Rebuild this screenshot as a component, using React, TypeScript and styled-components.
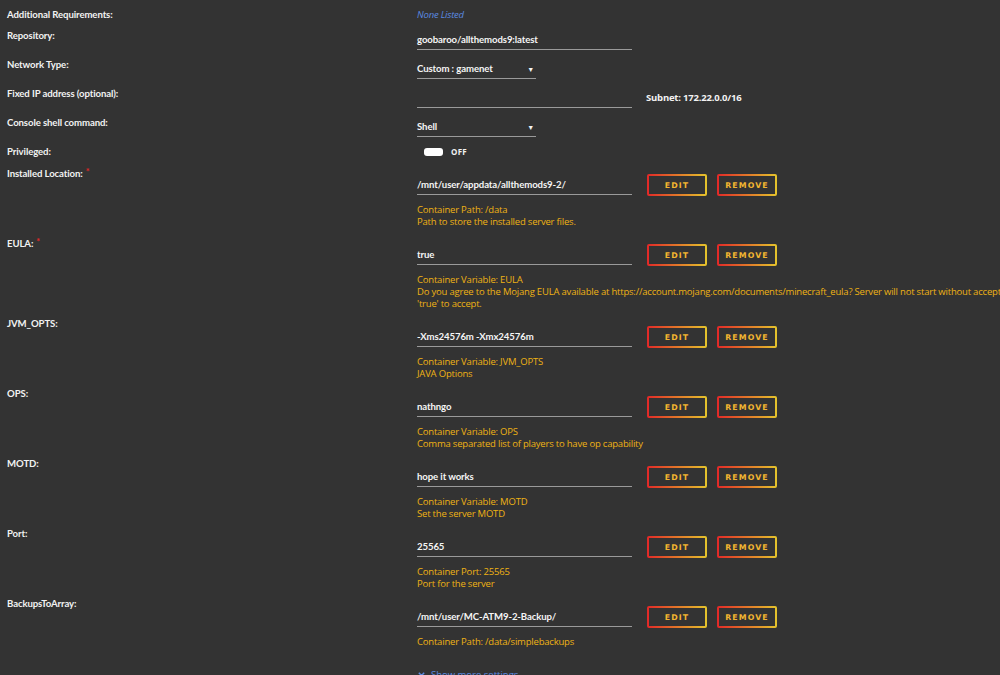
import styled, { createGlobalStyle } from 'styled-components';

const GlobalStyle = createGlobalStyle`
  html, body {
    margin: 0;
    padding: 0;
    background: #333333;
    overflow: hidden;
  }
  body {
    font-family: 'Open Sans', 'Noto Sans', sans-serif;
    color: #f2f2f2;
  }
`;

const Page = styled.div`
  width: 1000px;
  height: 675px;
  overflow: hidden;
  padding: 8px 0 0 7px;
  box-sizing: border-box;
`;

const Row = styled.div<{ $height: number }>`
  display: grid;
  grid-template-columns: 410px 1fr;
  height: ${(p) => p.$height}px;
  white-space: nowrap;
`;

const Label = styled.div`
  font-family: Lato, 'Open Sans', sans-serif;
  font-size: 9.6px;
  font-weight: 700;
  line-height: 14px;
  letter-spacing: -0.1px;
  color: #f2f2f2;
`;

const Required = styled.span`
  color: #e22828;
  margin-left: 3px;
  vertical-align: 2px;
  font-size: 9px;
`;

const NoneListed = styled.div`
  font-size: 9.5px;
  font-style: italic;
  line-height: 14px;
  letter-spacing: -0.2px;
  color: #5b8ae0;
`;

const Value = styled.div`
  display: flex;
  flex-direction: column;
  align-items: flex-start;
`;

const InlineRow = styled.div<{ $top?: number }>`
  display: flex;
  align-items: flex-start;
  padding-top: ${(p) => p.$top ?? 0}px;
`;

const TextInput = styled.div<{ $width?: number }>`
  width: ${(p) => p.$width ?? 215}px;
  height: 14px;
  margin-top: 4px;
  padding-bottom: 2px;
  border-bottom: 1px solid #9a9a9a;
  font-family: Lato, 'Open Sans', sans-serif;
  font-size: 9.6px;
  font-weight: 700;
  line-height: 14px;
  letter-spacing: -0.1px;
  color: #f5f5f5;
`;

const Select = styled(TextInput)`
  display: flex;
  justify-content: space-between;
  padding-right: 2px;
  box-sizing: content-box;
`;

const Caret = styled.span`
  font-size: 7px;
`;

const Subnet = styled.div`
  margin-left: 14px;
  margin-top: 4px;
  font-size: 9.5px;
  font-weight: 700;
  line-height: 14px;
  letter-spacing: -0.2px;
`;

const Toggle = styled.div`
  display: flex;
  align-items: center;
  gap: 8px;
  margin: 1px 0 0 7px;
  font-size: 8px;
  font-weight: 700;
  letter-spacing: 0.3px;
`;

const Knob = styled.span`
  width: 19px;
  height: 8px;
  border-radius: 3px;
  background: #ffffff;
`;

const Button = styled.div<{ $gap: number }>`
  margin-left: ${(p) => p.$gap}px;
  width: 60px;
  height: 22px;
  box-sizing: border-box;
  border: 2px solid transparent;
  border-radius: 2px;
  background:
    linear-gradient(#333333, #333333) padding-box,
    linear-gradient(90deg, #e22828, #e4c42c) border-box;
  display: flex;
  align-items: center;
  justify-content: center;
  font-family: 'DejaVu Sans', 'Open Sans', sans-serif;
  font-size: 7.8px;
  font-weight: 700;
  letter-spacing: 1.1px;
  color: #f4b630;
`;

const Desc = styled.div`
  margin-top: 8px;
  font-size: 9.5px;
  line-height: 12px;
  letter-spacing: -0.2px;
  color: #eeb214;
`;

const ShowMore = styled.div`
  display: flex;
  align-items: center;
  gap: 5px;
  margin: 14px 0 0 410px;
  font-size: 9.5px;
  line-height: 12px;
  color: #5b8ae0;
`;

type PathRow = {
  label: string;
  required?: boolean;
  value: string;
  desc: string[];
};

const pathRows: PathRow[] = [
  {
    label: 'Installed Location:',
    required: true,
    value: '/mnt/user/appdata/allthemods9-2/',
    desc: ['Container Path: /data', 'Path to store the installed server files.'],
  },
  {
    label: 'EULA:',
    required: true,
    value: 'true',
    desc: [
      'Container Variable: EULA',
      'Do you agree to the Mojang EULA available at https://account.mojang.com/documents/minecraft_eula? Server will not start without accepting.',
      "'true' to accept.",
    ],
  },
  {
    label: 'JVM_OPTS:',
    value: '-Xms24576m -Xmx24576m',
    desc: ['Container Variable: JVM_OPTS', 'JAVA Options'],
  },
  {
    label: 'OPS:',
    value: 'nathngo',
    desc: ['Container Variable: OPS', 'Comma separated list of players to have op capability'],
  },
  {
    label: 'MOTD:',
    value: 'hope it works',
    desc: ['Container Variable: MOTD', 'Set the server MOTD'],
  },
  {
    label: 'Port:',
    value: '25565',
    desc: ['Container Port: 25565', 'Port for the server'],
  },
  {
    label: 'BackupsToArray:',
    value: '/mnt/user/MC-ATM9-2-Backup/',
    desc: ['Container Path: /data/simplebackups'],
  },
];

export default function App() {
  return (
    <Page>
      <GlobalStyle />
      <Row $height={21}>
        <Label>Additional Requirements:</Label>
        <NoneListed>None Listed</NoneListed>
      </Row>
      <Row $height={29}>
        <Label>Repository:</Label>
        <Value>
          <TextInput>goobaroo/allthemods9:latest</TextInput>
        </Value>
      </Row>
      <Row $height={29}>
        <Label>Network Type:</Label>
        <Value>
          <Select $width={117}>
            <span>Custom : gamenet</span>
            <Caret>▼</Caret>
          </Select>
        </Value>
      </Row>
      <Row $height={29}>
        <Label>Fixed IP address (optional):</Label>
        <InlineRow>
          <TextInput />
          <Subnet>Subnet: 172.22.0.0/16</Subnet>
        </InlineRow>
      </Row>
      <Row $height={29}>
        <Label>Console shell command:</Label>
        <Value>
          <Select $width={117}>
            <span>Shell</span>
            <Caret>▼</Caret>
          </Select>
        </Value>
      </Row>
      <Row $height={20}>
        <Label>Privileged:</Label>
        <Value>
          <Toggle>
            <Knob />
            OFF
          </Toggle>
        </Value>
      </Row>
      {pathRows.map((r) => (
        <Row key={r.label} $height={46 + r.desc.length * 12}>
          <Label>
            {r.label}
            {r.required && <Required>*</Required>}
          </Label>
          <Value>
            <InlineRow $top={9}>
              <TextInput>{r.value}</TextInput>
              <Button $gap={15}>EDIT</Button>
              <Button $gap={10}>REMOVE</Button>
            </InlineRow>
            <Desc>
              {r.desc.map((d) => (
                <div key={d}>{d}</div>
              ))}
            </Desc>
          </Value>
        </Row>
      ))}
      <ShowMore>
        <svg width="9" height="9" viewBox="0 0 10 10" fill="none" stroke="#5b8ae0" strokeWidth="1.6">
          <path d="M2 2l3 3 3-3M2 5.5l3 3 3-3" />
        </svg>
        Show more settings ...
      </ShowMore>
    </Page>
  );
}
